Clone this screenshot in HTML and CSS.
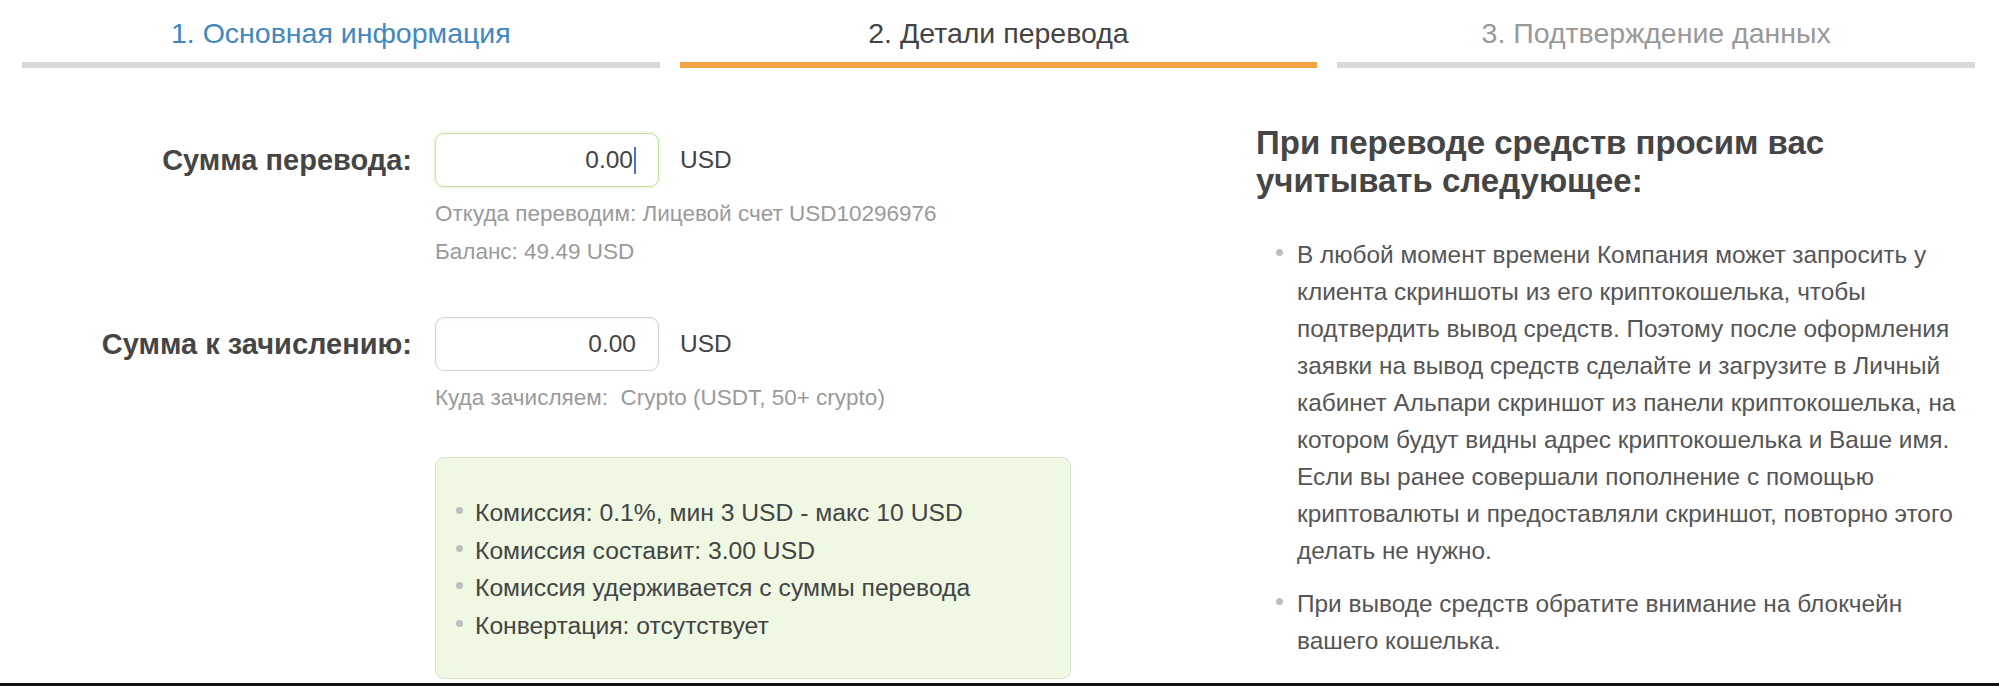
FILE: index.html
```html
<!DOCTYPE html>
<html lang="ru">

<head>
    <meta charset="UTF-8">
    <meta name="viewport" content="width=device-width, initial-scale=1.0">
    <title>Перевод средств</title>
    <link rel="stylesheet" href="styles.css">
</head>

<body>
    <div class="page">
        <!-- Steps -->
        <div class="steps">
            <div class="step done">1. Основная информация</div>
            <div class="step active">2. Детали перевода</div>
            <div class="step">3. Подтверждение данных</div>
        </div>

        <div class="content">
            <!-- Transfer form -->
            <div class="form">
                <div class="row">
                    <div class="row-label">Сумма перевода:</div>
                    <div class="row-field">
                        <div class="amount">
                            <div class="field focused"><span>0.00</span><span class="caret"></span></div>
                            <span class="currency">USD</span>
                        </div>
                        <p class="hint first">Откуда переводим: Лицевой счет USD10296976</p>
                        <p class="hint">Баланс: 49.49 USD</p>
                    </div>
                </div>

                <div class="row second">
                    <div class="row-label">Сумма к зачислению:</div>
                    <div class="row-field">
                        <div class="amount">
                            <div class="field"><span>0.00</span></div>
                            <span class="currency">USD</span>
                        </div>
                        <p class="hint first">Куда зачисляем:&nbsp; Crypto (USDT, 50+ crypto)</p>
                    </div>
                </div>

                <div class="row fees-row">
                    <div></div>
                    <div class="fees">
                        <ul class="dots">
                            <li>Комиссия: 0.1%, мин 3 USD - макс 10 USD</li>
                            <li>Комиссия составит: 3.00 USD</li>
                            <li>Комиссия удерживается с суммы перевода</li>
                            <li>Конвертация: отсутствует</li>
                        </ul>
                    </div>
                </div>
            </div>

            <!-- Notes -->
            <div class="notes">
                <h2>При переводе средств просим вас учитывать следующее:</h2>
                <ul class="dots notes-list">
                    <li>В любой момент времени Компания может запросить у клиента скриншоты из его криптокошелька, чтобы подтвердить вывод средств. Поэтому после оформления заявки на вывод средств сделайте и загрузите в Личный кабинет Альпари скриншот из панели криптокошелька, на котором будут видны адрес криптокошелька и Ваше имя.<br>Если вы ранее совершали пополнение с помощью криптовалюты и предоставляли скриншот, повторно этого делать не нужно.</li>
                    <li>При выводе средств обратите внимание на блокчейн вашего кошелька.</li>
                </ul>
            </div>
        </div>
    </div>
    <div class="bottom-bar"></div>
</body>

</html>
```

FILE: styles.css
```css
/* Global Style */
* {
    margin: 0;
    padding: 0;
    box-sizing: border-box;
}

body {
    font-family: 'Liberation Sans', Arial, Helvetica, sans-serif;
    background-color: #fff;
    color: #444;
    height: 686px;
    overflow: hidden;
    display: flex;
    flex-direction: column;
}

.page {
    flex: 1;
    overflow: hidden;
    padding: 0 24px 0 22px;
}

/* Steps */
.steps {
    display: grid;
    grid-template-columns: repeat(3, 1fr);
    column-gap: 20px;
}

.step {
    padding: 16px 0 12px;
    font-size: 28.5px;
    line-height: 34px;
    text-align: center;
    color: #999;
    border-bottom: 6px solid #c9c9c9;
    border-image: linear-gradient(#dadada, #bfbfbf 50%, #d8d8d8) 1;
}

.step.done {
    color: #4287bf;
}

.step.active {
    color: #444;
    border-image: linear-gradient(#f5a646, #ee9127 50%, #f3a343) 1;
}

/* Form */
.content {
    display: flex;
}

.form {
    flex: 1;
    padding-top: 65px;
}

.row {
    display: grid;
    grid-template-columns: 390px 1fr;
    column-gap: 23px;
}

.row.second {
    margin-top: 46px;
}

.row-label {
    font-size: 29px;
    font-weight: bold;
    line-height: 54px;
    text-align: right;
    color: #454545;
}

.amount {
    display: flex;
    align-items: center;
}

.field {
    width: 224px;
    height: 54px;
    padding-right: 22px;
    display: flex;
    align-items: center;
    justify-content: flex-end;
    font-size: 24.5px;
    color: #444;
    border: 1px solid #d3d3d3;
    border-radius: 9px;
    box-shadow: inset 0 1px 3px rgba(0, 0, 0, 0.06);
}

.field.focused {
    border-color: #c2df9f;
    box-shadow: 0 0 4px #d9eec2, inset 0 1px 2px rgba(0, 0, 0, 0.04);
}

.caret {
    width: 2px;
    height: 27px;
    margin-left: 1px;
    background-color: #4d6fdc;
}

.currency {
    margin-left: 21px;
    font-size: 24.5px;
    color: #444;
}

.hint {
    font-size: 22.5px;
    line-height: 38px;
    color: #9a9a9a;
}

.hint.first {
    margin-top: 8px;
}

/* Fees box */
.fees-row {
    margin-top: 40px;
}

.fees {
    width: 636px;
    height: 222px;
    padding: 36px 0 0 39px;
    background-color: #eef8e2;
    border: 1px solid #d6e6c6;
    border-radius: 9px;
}

.dots {
    list-style: none;
}

.dots li {
    position: relative;
    font-size: 24.7px;
    line-height: 37.5px;
}

.dots li::before {
    content: "";
    position: absolute;
    left: -19px;
    top: 13px;
    width: 7px;
    height: 7px;
    border-radius: 50%;
    background-color: #bdbdbd;
}

/* Notes */
.notes {
    width: 719px;
    padding-top: 56px;
}

.notes h2 {
    font-size: 33px;
    line-height: 38px;
    color: #454545;
    margin-bottom: 36px;
}

.notes-list {
    padding-left: 41px;
    padding-right: 10px;
}

.notes-list li {
    font-size: 24.4px;
    line-height: 37px;
    color: #555;
}

.notes-list li + li {
    margin-top: 16px;
}

.notes-list li::before {
    left: -21px;
}

.bottom-bar {
    height: 3px;
    background-color: #111;
}
```
